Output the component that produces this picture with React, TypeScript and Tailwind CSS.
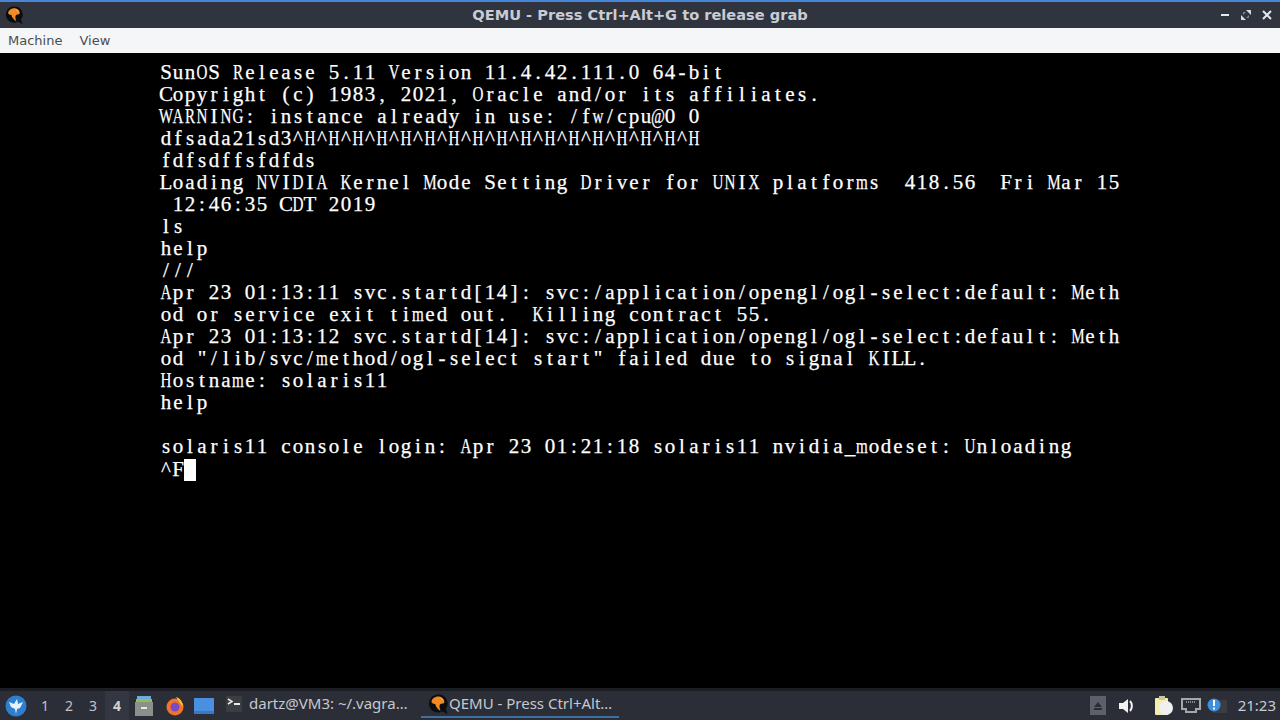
import { ReactNode } from 'react';

const consoleLines = [
  'SunOS Release 5.11 Version 11.4.42.111.0 64-bit',
  'Copyright (c) 1983, 2021, Oracle and/or its affiliates.',
  'WARNING: instance already in use: /fw/cpu@0 0',
  'dfsada21sd3^H^H^H^H^H^H^H^H^H^H^H^H^H^H^H^H^H',
  'fdfsdffsfdfds',
  'Loading NVIDIA Kernel Mode Setting Driver for UNIX platforms  418.56  Fri Mar 15',
  ' 12:46:35 CDT 2019',
  'ls',
  'help',
  '///',
  'Apr 23 01:13:11 svc.startd[14]: svc:/application/opengl/ogl-select:default: Meth',
  'od or service exit timed out.  Killing contract 55.',
  'Apr 23 01:13:12 svc.startd[14]: svc:/application/opengl/ogl-select:default: Meth',
  'od "/lib/svc/method/ogl-select start" failed due to signal KILL.',
  'Hostname: solaris11',
  'help',
  '',
  'solaris11 console login: Apr 23 01:21:18 solaris11 nvidia_modeset: Unloading',
  '^F',
];

// the console font is a fixed 12px cell serif, wide letters get squeezed into the cell
const wideChars = 'mwMWNHDOQAUVGKRXY@';

function ConsoleLine({ text }: { text: string }) {
  return (
    <div className="flex h-[22px] whitespace-pre">
      {text.split('').map((ch, i) => (
        <span key={i} className={`w-3 shrink-0 text-center ${wideChars.includes(ch) ? 'inline-block scale-x-[0.72]' : ''}`}>
          <span className="-mx-2 inline-block">{ch}</span>
        </span>
      ))}
    </div>
  );
}

function QemuIcon({ size }: { size: number }) {
  return (
    <svg width={size} height={size} viewBox="0 0 20 20" className="shrink-0">
      <path d="M10 .5a9 9 0 1 0 4.500 16.800L18 19.500h1.500l-1.800-4.500A9 9 0 0 0 10 .5z" fill="#0c0c0e" />
      <path d="M3.500 8C3.500 4.500 7.500 2 11 2.500c3.500.5 6 3.500 5.200 6.200-.8 1.300-2.700.6-3.900 1.200-1.300 1-.8 4 .2 7-2.800-1.800-5-4.700-5.300-7C5.500 10 4 9.200 3.500 8z" fill="#f08a24" />
      <path d="M11.500 3.500c2 .4 3.400 1.600 3.800 3.500-1-1.500-2.200-2.500-3.800-3.500z" fill="#ffd9a8" />
    </svg>
  );
}

function TerminalIcon() {
  return (
    <svg width="16" height="16" viewBox="0 0 16 16" className="shrink-0">
      <rect width="16" height="16" rx="1" fill="#3b3d40" />
      <path d="M2 3l4 2.500L2 8" fill="none" stroke="#e8e8e8" strokeWidth="1.500" />
      <rect x="8" y="7" width="6" height="2" fill="#e8e8e8" />
    </svg>
  );
}

function WindowButtons() {
  return (
    <div className="flex w-[75px] shrink-0 items-center justify-end gap-[9px] pr-[7px]">
      <svg width="12" height="12" viewBox="0 0 12 12">
        <rect x="2" y="5" width="8" height="2" fill="#e6e8ec" />
      </svg>
      <svg width="12" height="12" viewBox="0 0 12 12">
        <path d="M1 11V6l5 5zM11 1v5L6 1z" fill="#d8dbe0" />
        <path d="M3 3h3L3 6zM9 9H6l3-3z" fill="#7d828c" />
      </svg>
      <svg width="12" height="12" viewBox="0 0 12 12">
        <path d="M2 2l8 8M10 2l-8 8" stroke="#e6e8ec" strokeWidth="2" />
      </svg>
    </div>
  );
}

function TaskButton({ active, children }: { active?: boolean; children: ReactNode }) {
  return (
    <div className={`flex h-[27px] w-[198px] items-center text-[15px] text-[#c5c8cf] border-b-2 ${active ? 'border-[#3f6f9f]' : 'border-transparent'}`}>
      {children}
    </div>
  );
}

function Taskbar() {
  return (
    <div className="flex h-8 shrink-0 items-center bg-[#2b2e37] border-t-[3px] border-[#1c1e24] font-['Noto_Sans',sans-serif]">
      <svg width="24" height="24" viewBox="0 0 24 24" className="ml-[4px] shrink-0">
        <circle cx="12" cy="12" r="10.500" fill="#2f7fd0" />
        <path d="M5 8l5 2 3-5 1 5 5-2-3 6-3 1-1 5-1-5-4-2z" fill="#e8f2fb" />
      </svg>
      <div className="ml-[5px] flex h-full items-center text-[14px] text-[#c0c3ca]">
        <span className="w-6 text-center">1</span>
        <span className="w-6 text-center">2</span>
        <span className="w-6 text-center">3</span>
        <span className="flex h-full w-6 items-center justify-center bg-[#343741] font-bold text-[#d0d3d8]">4</span>
      </div>
      <svg width="20" height="22" viewBox="0 0 20 22" className="ml-[5px] shrink-0">
        <rect x="3" y="1" width="14" height="3" fill="#6fa8dc" />
        <rect x="2" y="4" width="16" height="3" fill="#8cc152" />
        <path d="M1 7h18v14H1z" fill="#8d8f8b" />
        <rect x="7" y="12" width="6" height="2" fill="#e8e8e8" />
      </svg>
      <svg width="20" height="22" viewBox="0 0 20 20" className="ml-[11px] shrink-0">
        <circle cx="10" cy="11" r="8.500" fill="#f0742b" />
        <path d="M11 1c4 1 7 5 7 10l-3-4c-1-2-3-4-4-6z" fill="#ffc22e" />
        <circle cx="10" cy="11" r="4.500" fill="#7a4cc4" />
      </svg>
      <svg width="20" height="16" viewBox="0 0 20 16" className="ml-[9px] shrink-0">
        <path d="M0 0h20v16H0z" fill="#4a8fe0" />
        <rect y="13" width="20" height="3" fill="#3a78c4" />
      </svg>
      <div className="ml-[12px] h-full">
        <TaskButton>
          <TerminalIcon />
          <span className="ml-[7px]">dartz@VM3: ~/.vagra…</span>
        </TaskButton>
      </div>
      <div className="-ml-[3px] h-full">
        <TaskButton active>
          <span className="ml-[7px]">
            <QemuIcon size={20} />
          </span>
          <span className="ml-[1px]">QEMU - Press Ctrl+Alt…</span>
        </TaskButton>
      </div>
      <div className="ml-auto flex h-full items-center pr-1">
        <div className="flex h-[19px] w-4 items-center justify-center bg-[#5d6068]">
          <svg width="10" height="10" viewBox="0 0 10 10">
            <path d="M5 1l4 5H1zM1 7h8v2H1z" fill="#2b2e37" />
          </svg>
        </div>
        <svg width="18" height="18" viewBox="0 0 18 18" className="ml-[12px]">
          <path d="M1 6h4l5-4v14l-5-4H1z" fill="#f2f2f2" />
          <path d="M12 4c2.500 2.500 2.500 7.500 0 10" fill="none" stroke="#f2f2f2" strokeWidth="2" />
        </svg>
        <svg width="20" height="20" viewBox="0 0 20 20" className="ml-[18px]">
          <rect x="1" y="2" width="13" height="17" rx="1" fill="#f4efb0" />
          <rect x="5" y="0" width="6" height="4" fill="#c9c9a0" />
          <circle cx="12" cy="12" r="7" fill="#f0f0f0" />
        </svg>
        <svg width="20" height="16" viewBox="0 0 20 16" className="ml-[7px]">
          <path d="M1 1h18v10h-4v3H5v-3H1z" fill="none" stroke="#a5a7ab" strokeWidth="2" />
          <path d="M5 4h10" stroke="#8a8c90" strokeDasharray="1 1" strokeWidth="2" />
        </svg>
        <svg width="20" height="18" viewBox="0 0 20 18" className="ml-[6px]">
          <rect x="6" y="3" width="14" height="13" fill="#3a3d42" />
          <circle cx="7" cy="8" r="6.500" fill="#3d8fe0" />
          <rect x="6" y="3" width="2" height="6" fill="#fff" />
          <rect x="6" y="10.500" width="2" height="2" fill="#fff" />
        </svg>
        <span className="ml-[11px] text-[15px] text-[#c8cbd0]">21:23</span>
      </div>
    </div>
  );
}

function App() {
  return (
    <div className="flex h-screen w-screen flex-col overflow-hidden bg-black">
      <div className="flex h-[28px] shrink-0 items-center border-t-2 border-[#4a86d8] bg-[#2f343f]">
        <div className="w-[75px] shrink-0 pl-[5px]">
          <QemuIcon size={18} />
        </div>
        <div className="flex-1 text-center font-['DejaVu_Sans',sans-serif] text-[14.6px] font-bold text-[#c8ccd4]">
          QEMU - Press Ctrl+Alt+G to release grab
        </div>
        <WindowButtons />
      </div>
      <div className="flex h-[25px] shrink-0 items-center gap-[17px] bg-[#f5f6f7] pl-2 font-['DejaVu_Sans',sans-serif] text-[13px] text-[#4a4d52]">
        <span>Machine</span>
        <span>View</span>
      </div>
      <div className="min-h-0 flex-1 pl-[160px] pt-2">
        <div className="font-['Liberation_Serif',serif] text-[21px] leading-[22px] text-white [-webkit-text-stroke:0.25px_#ffffff]">
          {consoleLines.slice(0, -1).map((line, i) => (
            <ConsoleLine key={i} text={line} />
          ))}
          <div className="mt-[1px] flex h-[22px]">
            <ConsoleLine text={consoleLines[consoleLines.length - 1]} />
            <span className="mt-[1px] h-[22px] w-3 bg-white" />
          </div>
        </div>
      </div>
      <Taskbar />
    </div>
  );
}

export default App;
